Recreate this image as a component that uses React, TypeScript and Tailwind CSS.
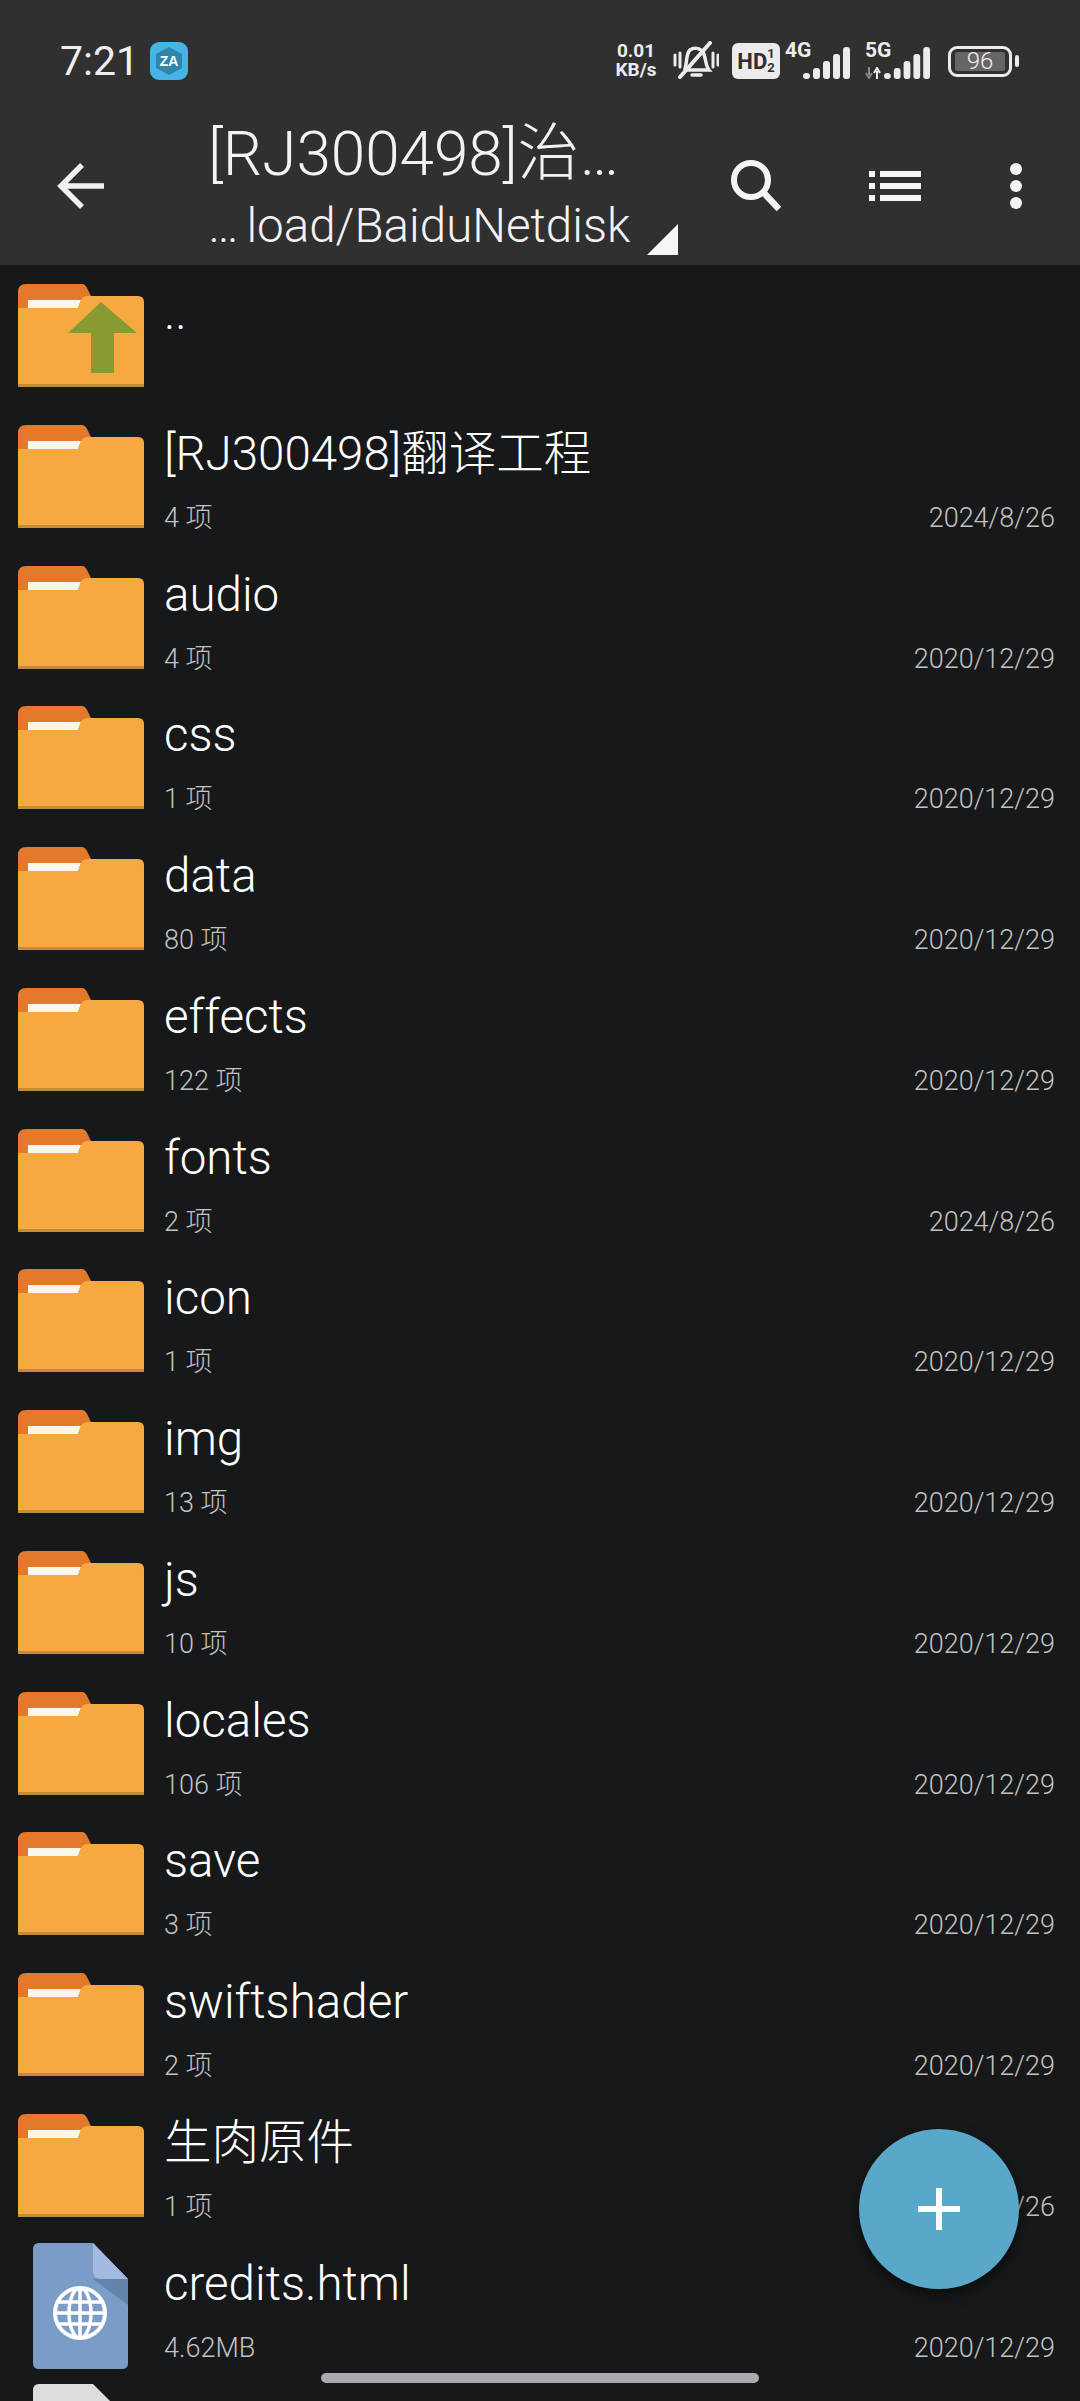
import React from "react";

const font = { fontFamily: 'Roboto, "Noto Sans CJK SC", sans-serif' };

function FolderIcon({ up }: { up?: boolean }) {
  return (
    <svg width="126" height="103" viewBox="0 0 126 103" className="shrink-0">
      <path d="M0 30V8Q0 0 8 0H64Q67 0 69 4L73 12H100V30Z" fill="#e4782b" />
      <path d="M10 16H63L60 24H10Z" fill="#fbf6ec" />
      <path d="M0 24H60L63 16Q65 12 70 12H120Q126 12 126 18V103H0Z" fill="#f7a941" />
      <rect x="0" y="100" width="126" height="3" fill="#c58a3a" />
      {up && <path d="M83 18L119 49H96V89H73V49H50Z" fill="#8a9a32" />}
    </svg>
  );
}

function HtmlIcon() {
  return (
    <svg width="95" height="126" viewBox="0 0 95 126" className="shrink-0 ml-[15px]">
      <path d="M6 0H60L95 36V120Q95 126 89 126H6Q0 126 0 120V6Q0 0 6 0Z" fill="#7a9cc6" />
      <path d="M60 36H95V62Z" fill="#6483ab" />
      <path d="M60 0L95 36H68Q60 36 60 28Z" fill="#a4bbdf" />
      <g fill="none" stroke="#fff" strokeWidth="3.5">
        <circle cx="47" cy="70" r="25" strokeWidth="4" />
        <ellipse cx="47" cy="70" rx="11" ry="25" />
        <path d="M47 45V95M22 70H72M25 59H69M25 81H69" />
      </g>
    </svg>
  );
}

function BlankFileIcon() {
  return (
    <svg width="95" height="17" viewBox="0 0 95 17" className="shrink-0 ml-[15px] block">
      <path d="M6 0H60L77 17H0V6Q0 0 6 0Z" fill="#dcdcdc" />
    </svg>
  );
}

function Row({ name, sub, date, up, file }: { name: string; sub?: string; date?: string; up?: boolean; file?: boolean }) {
  return (
    <div className="flex h-[140.77px] shrink-0 pl-[18px] pr-[25px] pt-[19px]">
      <div className={file ? "w-[126px] -mt-[12px]" : "w-[126px]"}>{file ? <HtmlIcon /> : <FolderIcon up={up} />}</div>
      <div className="flex-1 min-w-0 pl-[20px]">
        <div className="text-[47.5px] font-light leading-[60px] text-[#ffffff] -mt-[1px] whitespace-nowrap">{name}</div>
        {sub && (
          <div className="flex justify-between items-center mt-[14px] text-[27px] font-light leading-[40px] text-[#c2c2c2]">
            <span>{sub}</span>
            <span>{date}</span>
          </div>
        )}
      </div>
    </div>
  );
}

function Bars({ w, heights }: { w: number; heights: number[] }) {
  const step = w / heights.length;
  return (
    <svg width={w} height="32" viewBox={`0 0 ${w} 32`} className="block">
      {heights.map((h, i) => (
        <rect key={i} x={i * step + 1} y={32 - h} width={step - 3} height={h} rx="3" fill="#ececec" />
      ))}
    </svg>
  );
}

function StatusBar() {
  return (
    <div className="flex items-center h-[120px] pt-[2px] pl-[60px] pr-[61px] text-[#f0eef0]">
      <span className="text-[41px] leading-[48px] w-[90px]">7:21</span>
      <svg width="38" height="38" viewBox="0 0 38 38">
        <rect width="38" height="38" rx="9" fill="#46b4e4" />
        <path d="M19 5L32 12V26L19 33L6 26V12Z" fill="#2f86ad" />
        <text x="19" y="24" fontSize="14" fontWeight="700" fill="#fff" textAnchor="middle" fontFamily="Liberation Sans">ZA</text>
      </svg>
      <div className="flex-1" />
      <div className="flex flex-col items-center gap-[1px] w-[50px] h-[38px] text-[19px] font-bold leading-[18px] text-[#ececec] mr-[12px]">
        <span>0.01</span>
        <span>KB/s</span>
      </div>
      <svg width="46" height="40" viewBox="0 0 46 40" className="mr-[13px]" fill="none" stroke="#ececec" strokeWidth="3.5" strokeLinecap="round">
        <path d="M12 28C14 22 13 12 17 9C21 6 27 7 30 11C33 16 32 24 36 29H12Z" />
        <path d="M19 34H28" />
        <path d="M7 36L37 2" strokeWidth="4" />
        <path d="M2 14V24M7 12V26M40 12V26M45 14V24" strokeWidth="3" />
      </svg>
      <div className="flex items-center justify-center w-[48px] h-[36px] rounded-[6px] bg-[#ececec] text-[#303030] text-[22px] font-bold mr-[5px]">
        HD<span className="text-[13px] leading-[14px] flex flex-col"><span>1</span><span>2</span></span>
      </div>
      <div className="relative w-[67px] h-[36px] mr-[13px]">
        <span className="absolute left-0 -top-[3px] text-[21px] font-bold text-[#ececec] leading-[20px]">4G</span>
        <div className="absolute right-0 bottom-0"><Bars w={50} heights={[6, 11, 18, 25, 32]} /></div>
      </div>
      <div className="relative w-[67px] h-[36px] mr-[16px]">
        <span className="absolute left-0 -top-[3px] text-[21px] font-bold text-[#ececec] leading-[20px]">5G</span>
        <svg width="16" height="12" viewBox="0 0 16 12" className="absolute left-0 bottom-0">
          <path d="M4 0V8M1 6L4 11L7 6" stroke="#888" strokeWidth="2" fill="none" />
          <path d="M12 12V4M9 6L12 1L15 6" stroke="#ececec" strokeWidth="2" fill="none" />
        </svg>
        <div className="absolute right-0 bottom-0"><Bars w={49} heights={[6, 11, 18, 25, 32]} /></div>
      </div>
      <div className="flex items-center justify-center w-[64px] h-[31px] border-[3px] border-[#ececec] rounded-[9px]">
        <div className="w-[50px] h-[19px] bg-[#666] rounded-[2px] text-[24px] leading-[19px] text-center text-[#f0f0f0] font-light">96</div>
      </div>
      <div className="w-[4px] h-[12px] bg-[#ececec] rounded-[2px] ml-[3px]" />
    </div>
  );
}

function Toolbar() {
  return (
    <div className="flex items-center h-[145px] pb-[14px]">
      <div className="w-[208px] shrink-0 flex pl-[56px]">
        <svg width="50" height="50" viewBox="0 0 50 50" fill="none" stroke="#f5f0f5" strokeWidth="5.5">
          <path d="M48 25H6M26 4L5 25L26 46" />
        </svg>
      </div>
      <div className="w-[480px] shrink-0 text-[#f6f1f6] font-light">
        <div className="text-[62px] leading-[68px] whitespace-nowrap">[RJ300498]治…</div>
        <div className="relative text-[47.5px] leading-[52px] whitespace-nowrap mt-[12px]">
          <span className="tracking-[3px] mr-[5px]">…</span>load/BaiduNetdisk
          <svg width="31" height="31" viewBox="0 0 31 31" className="absolute left-[439px] top-[24px]">
            <path d="M31 0V31H0Z" fill="#f5f5f5" />
          </svg>
        </div>
      </div>
      <div className="flex-1 flex items-center pl-[43px]">
        <svg width="50" height="52" viewBox="0 0 50 52" fill="none" stroke="#f5f5f5" strokeWidth="6">
          <circle cx="20" cy="20" r="17" />
          <path d="M32 32L48 49" strokeWidth="6.5" />
        </svg>
        <svg width="52" height="30" viewBox="0 0 52 30" fill="#f5f5f5" className="ml-[88px]">
          <path d="M0 0H6V6H0ZM11 0H52V6H11ZM0 12H6V18H0ZM11 12H52V18H11ZM0 24H6V30H0ZM11 24H52V30H11Z" />
        </svg>
        <svg width="12" height="46" viewBox="0 0 12 46" fill="#f5f5f5" className="ml-[89px]">
          <circle cx="6" cy="6" r="6" />
          <circle cx="6" cy="23" r="6" />
          <circle cx="6" cy="40" r="6" />
        </svg>
      </div>
    </div>
  );
}

const rows = [
  { name: "[RJ300498]翻译工程", sub: "4 项", date: "2024/8/26" },
  { name: "audio", sub: "4 项", date: "2020/12/29" },
  { name: "css", sub: "1 项", date: "2020/12/29" },
  { name: "data", sub: "80 项", date: "2020/12/29" },
  { name: "effects", sub: "122 项", date: "2020/12/29" },
  { name: "fonts", sub: "2 项", date: "2024/8/26" },
  { name: "icon", sub: "1 项", date: "2020/12/29" },
  { name: "img", sub: "13 项", date: "2020/12/29" },
  { name: "js", sub: "10 项", date: "2020/12/29" },
  { name: "locales", sub: "106 项", date: "2020/12/29" },
  { name: "save", sub: "3 项", date: "2020/12/29" },
  { name: "swiftshader", sub: "2 项", date: "2020/12/29" },
  { name: "生肉原件", sub: "1 项", date: "2024/8/26" },
];

export default function App() {
  return (
    <div className="relative w-[1080px] h-[2401px] overflow-hidden bg-[#171819] flex flex-col" style={font}>
      <div className="bg-[#303030] shrink-0">
        <StatusBar />
        <Toolbar />
      </div>
      <div className="flex flex-col">
        <Row name=".." up />
        {rows.map((r) => (
          <Row key={r.name} {...r} />
        ))}
        <Row name="credits.html" sub="4.62MB" date="2020/12/29" file />
        <div className="pl-[18px] mt-[8px]"><BlankFileIcon /></div>
      </div>
      <div className="absolute left-[859px] top-[2129px] w-[160px] h-[160px] rounded-full bg-[#5aa8c9] shadow-[0_6px_14px_rgba(0,0,0,0.5)] flex items-center justify-center">
        <svg width="42" height="42" viewBox="0 0 42 42" fill="#fff"><path d="M18 0H24V18H42V24H24V42H18V24H0V18H18Z" /></svg>
      </div>
      <div className="absolute left-[321px] top-[2373px] w-[438px] h-[10px] rounded-full bg-[#a9aaad]" />
    </div>
  );
}
